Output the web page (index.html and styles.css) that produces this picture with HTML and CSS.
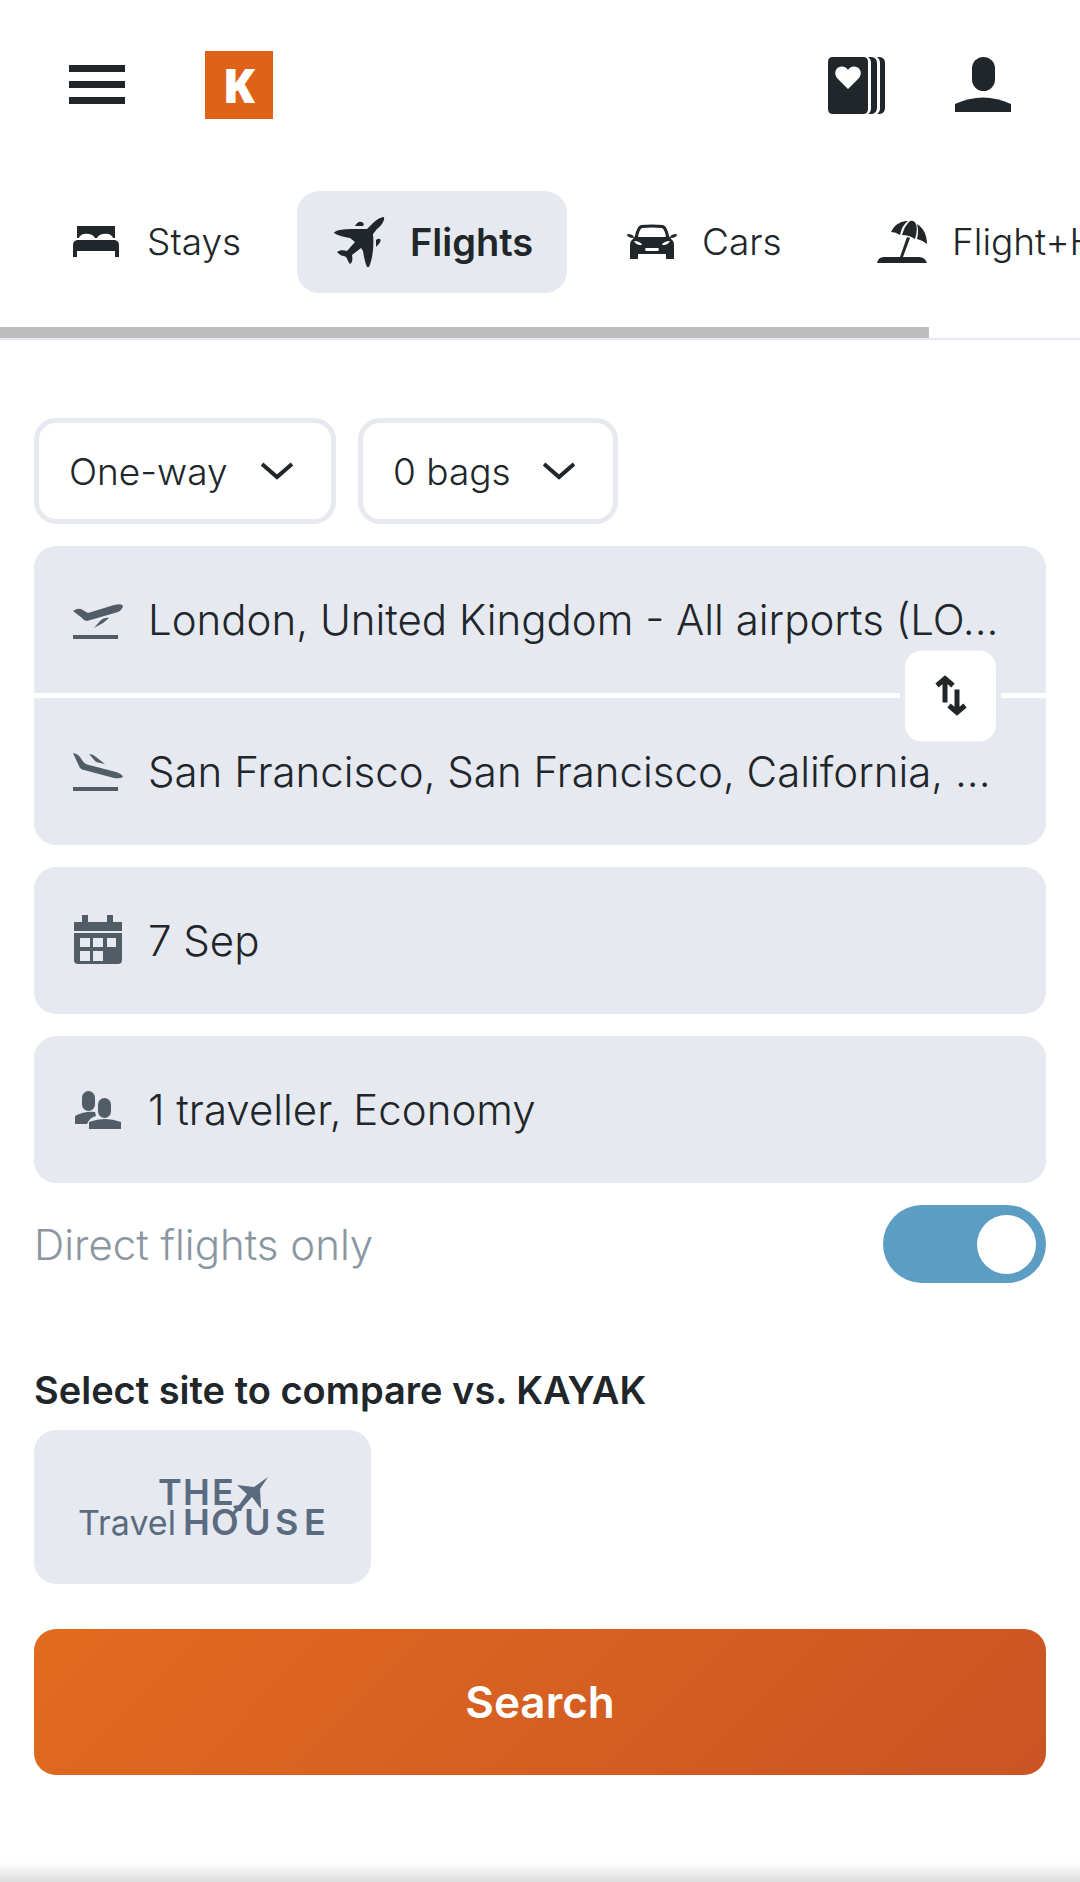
FILE: index.html
```html
<!DOCTYPE html>
<html lang="en-GB">
<head>
<meta charset="utf-8">
<meta name="viewport" content="width=device-width, initial-scale=1">
<title>KAYAK flights</title>
<link rel="stylesheet" href="styles.css">
</head>
<body>
<header class="header">
  <button class="icon-button" type="button" aria-label="Menu">
    <svg width="56" height="56" viewBox="0 0 56 56"><path d="M0 8h56v7H0zM0 24h56v7H0zM0 40h56v7H0z"/></svg>
  </button>
  <a class="logo" href="#" aria-label="KAYAK home">K</a>
  <a class="icon-button" href="#" aria-label="Trips">
    <svg width="58" height="58" viewBox="0 -1 58 58"><path fill-rule="evenodd" d="M5 0h30q5 0 5 5v47q0 5-5 5H5q-5 0-5-5V5q0-5 5-5zM20 32l11-11q3-4 1-8c-3-5-10-4-12 0c-2-4-9-5-12 0q-2 4 1 8z"/><path d="M40 0h4q5 1 5 6v45q0 5-5 6h-4q3-2 3-6V6q0-4-3-6zM49 0h3q5 1 5 6v45q0 5-5 6h-3q3-2 3-6V6q0-4-3-6z"/></svg>
  </a>
  <a class="icon-button" href="#" aria-label="Account">
    <svg width="56" height="58" viewBox="0 -1 56 58"><rect x="17" y="0" width="23" height="34" rx="11.5"/><path d="M0 47q28-13 56 0v8H0z"/></svg>
  </a>
</header>

<nav class="tabs" aria-label="Products">
  <a class="tab tab-stays" href="#">
    <svg class="tab-icon" viewBox="0 0 56 56"><path d="M9 12h38v12h-2c-1-5-13-6-16 0h-2c-3-6-15-5-16 0H9z"/><path d="M9 26h38q4 1 4 5v12h-4v-6H9v6H5V31q0-4 4-5z"/></svg>
    Stays</a>
  <a class="tab tab-flights tab-active" href="#" aria-current="page">
    <svg class="tab-icon" viewBox="0 0 56 56"><path d="M53 3c1 4-3 9-7 12l-4 5c1 11 0 24-4 33h-2c-2-5-3-10-4-16l-2-3-9 7c1 5 0 8-2 9-2-2-2-4-4-7l-2-1c-3 0-5-2-7-4 3-2 6-2 10-1l8-9-5-4c-6-1-11-2-16-5 2-4 12-4 33-4l6-6c4-4 8-6 11-6z"/><path d="M24 12c2-4 6-6 9-2l-1 2zM45 33v-7c4-3 8 0 0 7z"/></svg>
    Flights</a>
  <a class="tab tab-cars" href="#">
    <svg class="tab-icon" viewBox="-1 0 56 56"><path fill-rule="evenodd" d="M17 11q11-1 22 0 4 1 6 11l3 4q2 1 2 5v14h-8v-5H14v5H6V31q0-4 3-6l2-3q2-10 6-11zM18 14q-3 2-4 9h28q-1-7-4-9-10-1-20 0zM10 27c2 4 5 4 8 4-1-3-5-4-8-4zM46 27c-3 0-7 1-8 4 3 0 6 0 8-4zM22 34q-2 1 0 3h12q2-2 0-3z"/><path d="M3 20q7 0 7 4-7 0-7-4zM53 20q-7 0-7 4 7 0 7-4z"/></svg>
    Cars</a>
  <a class="tab" href="#">
    <svg class="tab-icon" viewBox="-1 0 56 56"><path d="M17 18C21 9 29 7 34 7q-6 4-8 14-4-3-9-3zM28 21q3-10 8-14 4-1 6 3 2 6-1 15-6-4-13-4zM43 10c7 4 10 12 10 20q-5-4-10-5 2-8 0-15zM33 23l3 1-7 19h16q6 0 8 6H3q1-6 7-6h16z"/></svg>
    Flight+Hotel</a>
</nav>
<div class="scroll-track"><div class="scroll-thumb"></div></div>

<main>
<form class="search-form">
  <div class="options">
    <div class="select-box select-trip">
      <select aria-label="Trip type"><option>One-way</option></select>
      <svg class="chevron" viewBox="0 0 32 18"><path d="M1 2l15 13L31 2"/></svg>
    </div>
    <div class="select-box select-bags">
      <select aria-label="Bags"><option>0 bags</option></select>
      <svg class="chevron" viewBox="0 0 32 18"><path d="M1 2l15 13L31 2"/></svg>
    </div>
  </div>

  <div class="route">
    <label class="field field-from">
      <svg class="field-icon" viewBox="1 -8 56 56"><path d="M4 11q4-3 8-2l7 4 26-8q8-2 9 1-1 4-5 6l-31 9q-3 0-5-3zM25 28l6-7q4-4 9-3l-6 5zM4 35h45v4H4z"/></svg>
      <input class="field-input" type="text" aria-label="From" value="London, United Kingdom - All airports (LO...">
    </label>
    <label class="field field-to">
      <svg class="field-icon" viewBox="1 -8 56 56"><path d="M4 1q6 1 9 7 2 4 7 5l27 7q6 2 7 5-3 2-9 1L15 18q-4-1-5-4zM20 2q4 0 7 3l9 7-9-2zM4 35h45v4H4z"/></svg>
      <input class="field-input" type="text" aria-label="To" value="San Francisco, San Francisco, California, ...">
    </label>
    <button class="swap" type="button" aria-label="Swap origin and destination">
      <svg width="34" height="42" viewBox="0 0 34 42"><path d="M11 28V4M3 11l8-7 8 7M23 15v23M15 31l8 7 8-7"/></svg>
    </button>
  </div>

  <button class="field field-single" type="button">
    <svg class="field-icon" viewBox="0 0 56 56"><path fill-rule="evenodd" d="M12 2h6v7h19V2h6v7h9v9H4v-9h8zM4 20h48v27q0 4-4 4H8q-4 0-4-4zM10 25v9h10v-9zM23 25v9h10v-9zM37 25v9h9v-9zM10 38v10h10v-10zM23 38v10h10v-10z"/></svg>
    7 Sep</button>

  <button class="field field-single" type="button">
    <svg class="field-icon" viewBox="0 0 56 56"><rect x="12" y="9" width="13" height="20" rx="6.5"/><rect x="28" y="16" width="13" height="20" rx="6.5"/><path d="M5 34q10-5 20-4l1 4q-6 1-9 8H5zM19 40q16-6 32 0v7H19z"/></svg>
    1 traveller, Economy</button>

  <div class="direct">
    <label for="direct">Direct flights only</label>
    <input class="toggle" type="checkbox" id="direct" checked>
  </div>

  <fieldset class="compare">
    <legend>Select site to compare vs. KAYAK</legend>
    <button class="site" type="button" aria-label="The Travel House">
      <svg width="250" height="60" viewBox="0 0 250 60">
        <g class="site-caps"><text x="80" y="28">T</text><text x="105" y="28">H</text><text x="134" y="28">E</text>
        <text x="105" y="58">H</text><text x="133" y="58">O</text><text x="166" y="58">U</text><text x="197" y="58">S</text><text x="226" y="58">E</text></g>
        <text class="site-light" x="0" y="58">Travel</text>
        <path d="M190 0l-8 12 1 20-9-12-9 10-2 4h-3l-5 5h-3l5-7-2-3 6-1 8-11-10-9 17 2z"/>
      </svg>
    </button>
  </fieldset>

  <button class="submit" type="submit">Search</button>
</form>
</main>
<div class="bottom-shade"></div>
</body>
</html>
```
FILE: styles.css
```css
* { box-sizing: border-box; }

body {
  margin: 0;
  min-height: 100vh;
  display: flex;
  flex-direction: column;
  background: #fff;
  color: #20262a;
  font-family: Inter, "Liberation Sans", sans-serif;
  font-size: 37px;
  font-weight: 300;
  overflow-x: hidden;
}

button, input, select {
  font: inherit;
  color: inherit;
  border: 0;
  margin: 0;
}

a { color: inherit; text-decoration: none; }
svg { display: block; flex: none; fill: #20262a; }

.header {
  display: flex;
  align-items: center;
  padding: 51px 69px 0;
}

.icon-button { padding: 0; background: none; }
.header .icon-button:last-child { margin-left: 69px; }

.logo {
  display: grid;
  place-items: center;
  width: 68px;
  height: 68px;
  margin: 0 auto 0 80px;
  background: #df6219;
  color: #fff;
  font-family: "Open Sans", sans-serif;
  font-size: 47px;
  font-weight: 800;
  line-height: 64px;
}

.tabs {
  display: flex;
  gap: 22px;
  padding: 72px 0 34px 34px;
  overflow: hidden;
}

.tab {
  flex: none;
  display: flex;
  align-items: center;
  gap: 23px;
  height: 102px;
  padding: 0 34px;
  border-radius: 22px;
  line-height: 44px;
  white-space: nowrap;
}

.tab-icon { width: 56px; height: 56px; }
.tab-stays { width: 241px; }
.tab-flights { width: 270px; }
.tab-cars { width: 228px; }
.tab-active { background: #e6e9f0; font-size: 38px; font-weight: 600; }

.scroll-track { height: 13px; border-bottom: 2px solid #e6e9f2; }
.scroll-thumb { width: 86%; height: 11px; background: #bebebe; }

.search-form { padding: 78px 34px 0; }

.options { display: flex; gap: 22px; margin-bottom: 22px; }

.select-box { position: relative; height: 106px; }
.select-trip { width: 302px; }
.select-bags { width: 260px; }

.select-box select {
  appearance: none;
  width: 100%;
  height: 100%;
  padding: 0 0 0 30px;
  border: 5px solid #e6e9f0;
  border-radius: 22px;
  background: #fff;
}

.chevron {
  position: absolute;
  right: 43px;
  top: 44px;
  width: 32px;
  height: 18px;
  fill: none;
  stroke: #20262a;
  stroke-width: 4;
  pointer-events: none;
}

.route {
  position: relative;
  display: flex;
  flex-direction: column;
  gap: 5px;
}

.field {
  display: flex;
  align-items: center;
  gap: 22px;
  width: 100%;
  height: 147px;
  padding: 0 45px 0 36px;
  background: #e6e9f0;
  font-size: 42px;
  text-align: left;
}

.field-from { border-radius: 22px 22px 0 0; }
.field-to { border-radius: 0 0 22px 22px; }
.field-single { margin-top: 22px; border-radius: 22px; }
.field-icon { width: 56px; height: 56px; fill: #525c66; }

.field-input {
  flex: 1;
  min-width: 0;
  padding: 0;
  background: none;
  text-overflow: ellipsis;
}

.swap {
  position: absolute;
  right: 45px;
  top: 50%;
  display: grid;
  place-items: center;
  width: 101px;
  height: 101px;
  padding: 0;
  border: 5px solid #e6e9f0;
  border-radius: 22px;
  background: #fff;
  transform: translateY(-50%);
}

.swap svg { fill: none; stroke: #20262a; stroke-width: 5; }

.direct {
  display: flex;
  align-items: center;
  justify-content: space-between;
  margin-top: 22px;
  color: #8a96a1;
  font-size: 42px;
}

.toggle {
  appearance: none;
  display: flex;
  align-items: center;
  justify-content: flex-end;
  width: 163px;
  height: 78px;
  padding: 0 10px;
  border-radius: 39px;
  background: #5c9dc4;
}

.toggle::before {
  content: "";
  width: 59px;
  height: 59px;
  border-radius: 50%;
  background: #fff;
}

.toggle:not(:checked) { justify-content: flex-start; background: #8a96a1; }

.compare { margin: 85px 0 45px; padding: 0; border: 0; }
.compare legend { padding: 0; font-size: 38px; font-weight: 600; line-height: 44px; }

.site {
  display: grid;
  place-items: center;
  width: 337px;
  height: 154px;
  margin-top: 18px;
  padding: 0;
  border-radius: 22px;
  background: #e6e9f0;
}

.site svg { fill: #5a6b80; }
.site-caps { font-size: 36px; font-weight: 600; }
.site-light { font-size: 34px; font-weight: 400; }

.submit {
  width: 100%;
  height: 146px;
  border-radius: 22px;
  background: linear-gradient(135deg, #e26b1f, #ca5424);
  color: #fff;
  font-size: 44px;
  font-weight: 600;
}

.bottom-shade {
  height: 20px;
  margin-top: auto;
  background: linear-gradient(#fff, #dedede);
}
```
